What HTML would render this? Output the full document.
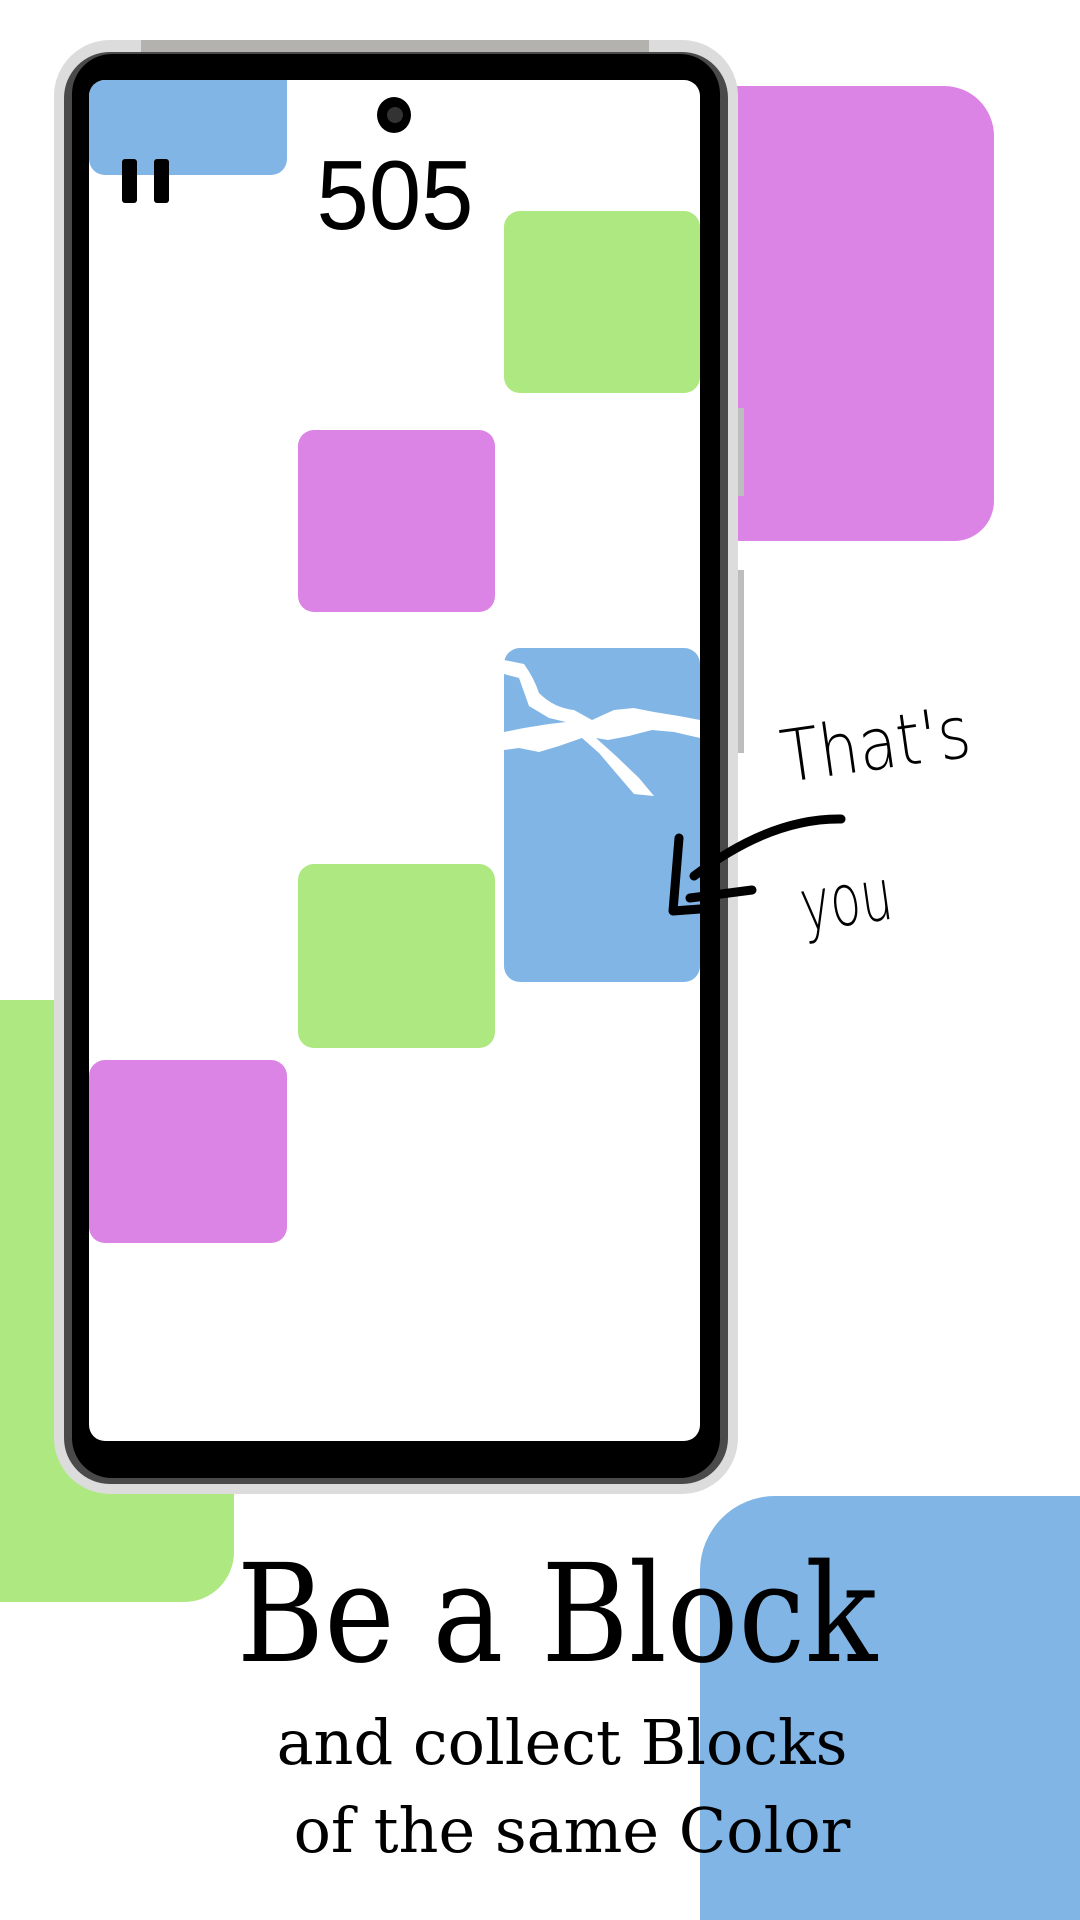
<!DOCTYPE html>
<html><head><meta charset="utf-8"><style>
html,body{margin:0;padding:0}
body{width:1080px;height:1920px;position:relative;overflow:hidden;background:#fff;font-family:"Liberation Sans",sans-serif}
.a{position:absolute}
.b{background:#80b5e6}.g{background:#aee880}.p{background:#dc83e6}
.blk{position:absolute;border-radius:16px}
</style></head><body>
<div class="a p" style="left:700px;top:86px;width:294px;height:455px;border-radius:0 50px 40px 0"></div>
<div class="a g" style="left:0;top:1000px;width:234px;height:602px;border-radius:0 0 50px 0"></div>
<div class="a b" style="left:700px;top:1496px;width:380px;height:424px;border-radius:75px 0 0 0"></div>

<div class="a" style="left:54px;top:40px;width:684px;height:1454px;background:#dcdcdc;border-radius:56px"></div>
<div class="a" style="left:141px;top:40px;width:508px;height:14px;background:#b3b2ae"></div>
<div class="a" style="left:738px;top:408px;width:6px;height:88px;background:#bdbdbd"></div>
<div class="a" style="left:738px;top:570px;width:6px;height:183px;background:#bdbdbd"></div>
<div class="a" style="left:64px;top:52px;width:664px;height:1432px;background:#4a4a4a;border-radius:46px"></div>
<div class="a" style="left:72px;top:54px;width:648px;height:1424px;background:#000;border-radius:40px"></div>
<div class="a" style="left:89px;top:80px;width:611px;height:1361px;background:#fff;border-radius:16px;overflow:hidden">
  <div class="blk b" style="left:0;top:-20px;width:198px;height:115px"></div>
  <div class="blk g" style="left:415px;top:131px;width:196px;height:182px"></div>
  <div class="blk p" style="left:209px;top:350px;width:197px;height:182px"></div>
  <div class="blk b" style="left:415px;top:568px;width:196px;height:334px"></div>
  <svg class="a" style="left:415px;top:568px" width="196" height="334" viewBox="0 0 196 334">
    <path d="M0 12 L20 16 Q30 30 35 45 Q50 60 70 62 L88 72 L110 62 L130 60 L150 64 L175 68 L196 72 L196 90 L170 84 L148 82 L125 88 L104 92 L92 90 L112 108 L135 130 L150 148 L130 146 L112 125 L95 105 L78 90 L55 98 L35 104 L15 100 L0 102 L0 84 L20 80 L45 76 L62 74 L45 70 L25 58 L15 30 L0 26 Z" fill="#fff"/>
  </svg>
  <div class="blk g" style="left:209px;top:784px;width:197px;height:184px"></div>
  <div class="blk p" style="left:0;top:980px;width:198px;height:183px"></div>
  <div class="a" style="left:33px;top:79px;width:15px;height:44px;background:#000;border-radius:3px"></div>
  <div class="a" style="left:65px;top:79px;width:15px;height:44px;background:#000;border-radius:3px"></div>
  <div class="a" style="left:156px;top:60px;width:300px;text-align:center;font-size:98px;line-height:110px;color:#000;transform:scaleX(0.96)">505</div>
  <div class="a" style="left:288px;top:17px;width:34px;height:36px;border-radius:50%;background:#000"></div>
  <div class="a" style="left:298px;top:27px;width:16px;height:16px;border-radius:50%;background:#333"></div>
</div>

<svg class="a" style="left:640px;top:680px" width="360" height="300" viewBox="640 680 360 300">
  <text x="780" y="770" font-family="'DejaVu Sans',sans-serif" font-size="72" font-weight="200" fill="#000" transform="rotate(-8 870 740)" textLength="190" lengthAdjust="spacingAndGlyphs">That's</text>
  <text x="800" y="925" font-family="'DejaVu Sans',sans-serif" font-size="72" font-weight="200" fill="#000" transform="rotate(-8 845 900)" textLength="92" lengthAdjust="spacingAndGlyphs">you</text>
  <path d="M841 819 Q770 818 694 876" stroke="#000" stroke-width="9" fill="none" stroke-linecap="round"/>
  <path d="M679 838 L673 911 L700 909 M690 898 L752 890" stroke="#000" stroke-width="9" fill="none" stroke-linecap="round" stroke-linejoin="round"/>
</svg>

<div class="a" style="left:0;top:1535px;width:1114px;text-align:center;font-family:'DejaVu Serif','Liberation Serif',serif;font-size:136px;line-height:160px;color:#000;transform:scaleX(0.875);transform-origin:557px 0">Be a Block</div>
<div class="a" style="left:0;top:1703px;width:1124px;text-align:center;font-family:'DejaVu Serif','Liberation Serif',serif;font-size:62px;line-height:80px;color:#000;transform:scaleX(1.0);transform-origin:562px 0">and collect Blocks</div>
<div class="a" style="left:0;top:1791px;width:1144px;text-align:center;font-family:'DejaVu Serif','Liberation Serif',serif;font-size:62px;line-height:80px;color:#000;transform:scaleX(1.0);transform-origin:572px 0">of the same Color</div>
</body></html>
